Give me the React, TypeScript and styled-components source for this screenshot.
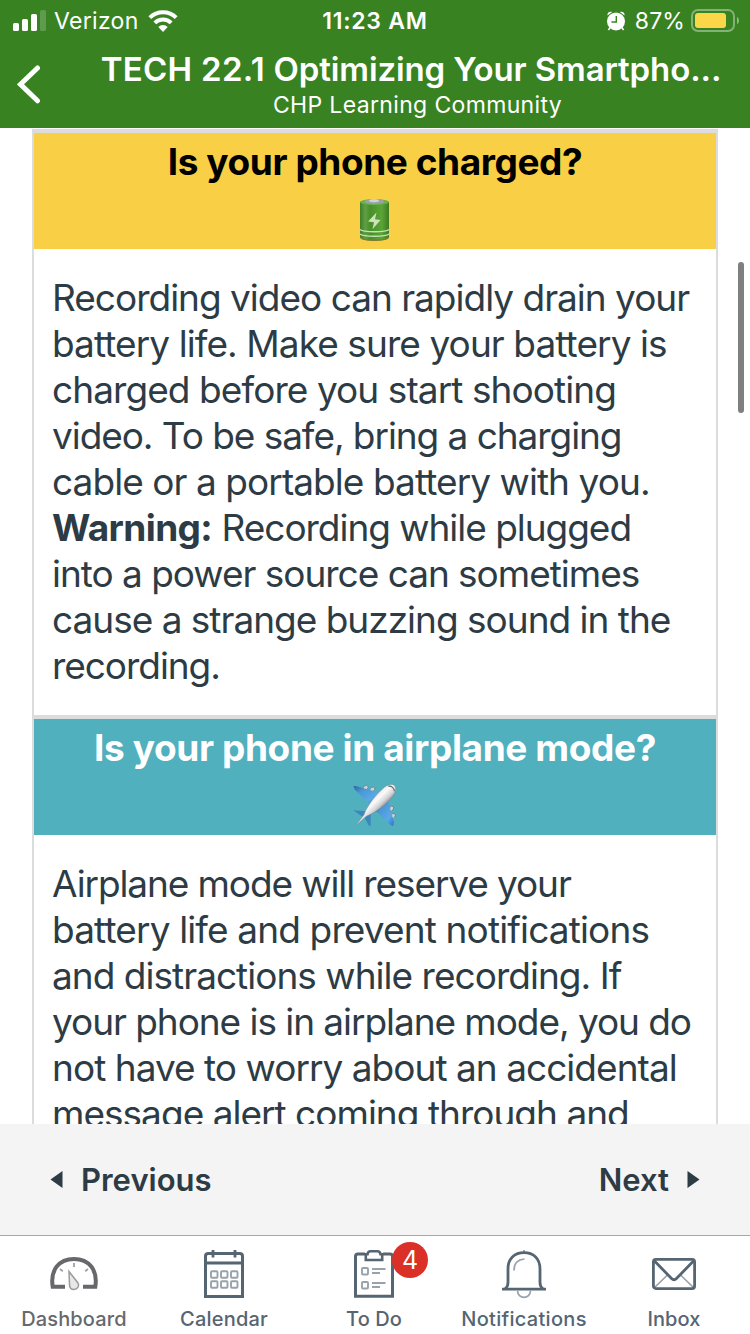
import React from 'react';
import styled, { createGlobalStyle } from 'styled-components';

const GlobalStyle = createGlobalStyle`
  * { box-sizing: border-box; }
  body { margin: 0; background: #fff; font-family: Inter, "Liberation Sans", sans-serif; }
`;

const Screen = styled.div`
  display: flex;
  flex-direction: column;
  width: 750px;
  height: 1334px;
  overflow: hidden;
  background: #fff;
`;

const Header = styled.header`
  height: 128px;
  flex: none;
  background: #388222;
  color: #fff;
`;

const StatusBar = styled.div`
  display: grid;
  grid-template-columns: 1fr auto 1fr;
  align-items: center;
  height: 40px;
  padding: 0 10px 0 13px;
  font-size: 23px;
  line-height: 40px;
`;

const StatusGroup = styled.div<{ $end?: boolean }>`
  display: flex;
  align-items: center;
  justify-content: ${p => (p.$end ? 'flex-end' : 'flex-start')};
`;

const Text = styled.span<{ $ls?: number; $weight?: number }>`
  letter-spacing: ${p => p.$ls ?? 0}px;
  font-weight: ${p => p.$weight ?? 'inherit'};
  white-space: pre;
`;

const Clock = styled(Text)`
  margin-right: 3px;
`;

const Carrier = styled(Text)`
  margin: 0 9px 0 7px;
  padding-top: 1px;
`;

const Percent = styled(Text)`
  margin: 0 6px 0 10px;
  padding-top: 1px;
`;

const NavBar = styled.div`
  display: flex;
  height: 88px;
`;

const BackButton = styled.button`
  display: flex;
  width: 72px;
  padding: 24px 0 0 17px;
  border: 0;
  background: none;
`;

const Titles = styled.div`
  display: flex;
  flex-direction: column;
  align-items: center;
  width: 678px;
`;

const Title = styled.h1`
  margin: 9px 0 0;
  font-size: 33px;
  font-weight: 600;
  line-height: 40px;
  white-space: nowrap;
`;

const Subtitle = styled.div<{ $ls: number }>`
  margin-top: 1px;
  padding-left: 13px;
  font-size: 23px;
  line-height: 30px;
  letter-spacing: ${p => p.$ls}px;
  white-space: nowrap;
`;

const Content = styled.main`
  display: flex;
  height: 996px;
  padding: 1px 6px 0 32px;
  overflow: hidden;
`;

const Card = styled.section`
  width: 686px;
  height: 1200px;
  flex: none;
  border: 2px solid #dcdcdc;
  border-width: 0 2px;
`;

const ScrollThumb = styled.div`
  width: 6px;
  height: 151px;
  margin: 133px 0 0 auto;
  border-radius: 3px;
  background: #7f7f7f;
`;

const Banner = styled.div<{ $bg: string; $color: string }>`
  display: flex;
  flex-direction: column;
  align-items: center;
  height: 120px;
  padding-top: 6px;
  border-top: 4px solid #dcdcdc;
  background: ${p => p.$bg};
  color: ${p => p.$color};
  font-size: 37px;
  font-weight: 700;
  line-height: 46px;
`;

const EmojiSlot = styled.div`
  height: 47px;
  margin-top: 13px;
`;

const Paragraph = styled.div`
  padding: 26px 18px;
  height: 466px;
  color: #2d3b45;
  font-size: 37px;
  line-height: 46px;
`;

const Line = styled.div<{ $ls: number }>`
  white-space: nowrap;
  letter-spacing: ${p => p.$ls}px;
`;

const Pager = styled.nav`
  display: flex;
  align-items: center;
  justify-content: space-between;
  height: 111px;
  flex: none;
  padding: 0 50px 1px 50px;
  background: #f4f4f4;
  color: #2d3b45;
  font-size: 31px;
  font-weight: 600;
`;

const PagerLink = styled.div`
  display: flex;
  align-items: center;
  gap: 18px;
`;

const TabBar = styled.nav`
  display: flex;
  height: 99px;
  flex: none;
  border-top: 1px solid #a6a6a6;
`;

const Tab = styled.div<{ $active?: boolean }>`
  display: flex;
  flex-direction: column;
  align-items: center;
  width: 150px;
  padding: 12px 2px 0 0;
  color: ${p => (p.$active ? '#68686c' : '#556572')};
  font-size: 20px;
  font-weight: 500;
  line-height: 24px;
`;

const TabIcon = styled.div`
  position: relative;
  height: 54px;
  margin-bottom: 5px;
`;

const Badge = styled.span`
  position: absolute;
  left: 38px;
  top: -6px;
  width: 36px;
  height: 36px;
  border-radius: 50%;
  background: #db3027;
  color: #fff;
  font-size: 25px;
  font-weight: 400;
  line-height: 37px;
  text-align: center;
`;

const SignalIcon = () => (
  <svg width="34" height="22" viewBox="0 0 34 22" fill="#fff">
    <rect x="0" y="13" width="6" height="8" rx="1.6" />
    <rect x="9" y="9" width="6" height="12" rx="1.6" />
    <rect x="18" y="4" width="6" height="17" rx="1.6" />
    <rect x="27" y="0" width="6" height="21" rx="1.6" opacity=".2" />
  </svg>
);

const WifiIcon = () => (
  <svg width="30" height="22" viewBox="0 0 30 22">
    <g fill="none" stroke="#fff" strokeWidth="4">
      <path d="M1.8 7.6a19 19 0 0 1 26.4 0" />
      <path d="M6.8 12.9a11.8 11.8 0 0 1 16.4 0" />
    </g>
    <path d="M10.3 16.9a6.8 6.8 0 0 1 9.4 0L15 22z" fill="#fff" />
  </svg>
);

const AlarmIcon = () => (
  <svg width="18" height="20" viewBox="0 0 18 20">
    <circle cx="9" cy="10.4" r="9" fill="#fff" />
    <path d="M.4 4.6C.2 1.8 2.2.2 5.2 1zM17.6 4.6C17.8 1.8 15.8.2 12.8 1z" fill="#fff" />
    <path d="M3.2 16.5 1.4 19M14.8 16.5l1.8 2.5" stroke="#fff" strokeWidth="1.6" />
    <path d="M9.3 5v6H4.5" fill="none" stroke="#388222" strokeWidth="1.4" />
  </svg>
);

const BatteryStatus = () => (
  <svg width="49" height="24" viewBox="0 0 49 24">
    <rect x="1" y="1" width="42" height="21" rx="6" fill="none" stroke="#fff" strokeOpacity=".38" strokeWidth="2" />
    <rect x="4" y="4" width="31" height="15" rx="3" fill="#fad648" />
    <path d="M46 8c2.6 1 2.6 6 0 7z" fill="#fff" fillOpacity=".45" />
  </svg>
);

const BackIcon = () => (
  <svg width="26" height="40" viewBox="0 0 26 40">
    <path d="M20.5 4 3.5 20.3l17 16.5" fill="none" stroke="#fff" strokeWidth="5" strokeLinecap="round" />
  </svg>
);

const BatteryEmoji = () => (
  <svg width="32" height="46" viewBox="0 0 32 46">
    <defs>
      <linearGradient id="cell" x1="0" x2="1">
        <stop offset="0" stopColor="#3f7d27" />
        <stop offset=".18" stopColor="#5fa043" />
        <stop offset=".35" stopColor="#498f2a" />
        <stop offset=".75" stopColor="#5aa535" />
        <stop offset="1" stopColor="#3d7a23" />
      </linearGradient>
    </defs>
    <path d="M1 4v35c0 5 29 5 29 0V4z" fill="url(#cell)" />
    <ellipse cx="15.500" cy="4" rx="14.500" ry="3" fill="#69b04b" />
    <ellipse cx="15.500" cy="3.600" rx="10" ry="2.300" fill="#9aa3a8" />
    <ellipse cx="15" cy="2.600" rx="5" ry="1.600" fill="#cad4e4" />
    <path d="M17.500 14.500 9 23.500l6 .8-1.500 7 8-9.300-5.500-.8z" fill="#cde2bd" />
    <path d="M1 31.500c3 3 26 3 29 0M1 36c3 3 26 3 29 0" fill="none" stroke="#c4e1b3" strokeWidth="1.500" />
    <path d="M2 40c3 3 24 3 27 0" fill="none" stroke="#837b31" strokeWidth="1.300" />
  </svg>
);

const PlaneEmoji = () => (
  <svg width="44" height="46" viewBox="39 42 132 138">
    <defs>
      <linearGradient id="body" gradientUnits="userSpaceOnUse" x1="105" y1="72" x2="138" y2="106">
        <stop offset="0" stopColor="#e9e9ec" />
        <stop offset=".35" stopColor="#fafafa" />
        <stop offset=".7" stopColor="#d3d2d6" />
        <stop offset="1" stopColor="#8b8990" />
      </linearGradient>
      <linearGradient id="wing" x1="0" y1="0" x2="1" y2="1">
        <stop offset="0" stopColor="#2a6499" />
        <stop offset=".3" stopColor="#4a97d6" />
        <stop offset=".7" stopColor="#5aaae6" />
        <stop offset="1" stopColor="#2c6fc4" />
      </linearGradient>
    </defs>
    <g fill="#cfd3d8" stroke="#5f7884" strokeWidth="2">
      <ellipse cx="77" cy="53" rx="8" ry="6" transform="rotate(-30 77 53)" />
      <ellipse cx="97" cy="58" rx="8" ry="6" transform="rotate(-30 97 58)" />
      <ellipse cx="154" cy="116" rx="8" ry="6" transform="rotate(-55 154 116)" />
      <ellipse cx="159" cy="138" rx="8" ry="6" transform="rotate(-55 159 138)" />
    </g>
    <path d="M40 48 50 49 118 68 88 101 45 60z" fill="url(#wing)" />
    <path d="M144 92 162 157 159 168 152 165 108 124z" fill="url(#wing)" />
    <path d="M40 121 78 124 68 140zM74 143 92 126 92 169 86 166z" fill="#3b86bd" />
    <path d="M50 163 72 134C82 106 108 73 134 51c12-9 24-10 30-4 6 7 4 19-5 31-20 26-50 48-80 61L53 162z" fill="url(#body)" stroke="#6f848e" strokeWidth="1.500" />
    <path d="M145 49c10-2 18 5 18 15" fill="none" stroke="#5e6469" strokeWidth="3.500" />
  </svg>
);

const Triangle = ({ flip }: { flip?: boolean }) => (
  <svg width="13" height="17" viewBox="0 0 13 17">
    <path d={flip ? 'M.5 0v17L12.500 8.500z' : 'M12.500 0v17L.5 8.500z'} fill="#2d3b45" />
  </svg>
);

const DashboardIcon = () => (
  <svg width="48" height="54" viewBox="1 0 48 54" fill="none">
    <path d="M16 38.700H3.700C1 22 10 11 25 11s24 11 21.300 27.700H34" stroke="#68686c" strokeWidth="4" />
    <path d="M25 15v4M11 21l2.800 2.300M39 21l-2.800 2.300" stroke="#a0a0a3" strokeWidth="1.800" />
    <path d="M20 23.500 29 35c1.500 3-.5 6.500-4 6.500-3 0-4.500-2-4.500-5z" fill="#e8e8e9" stroke="#9b9b9e" strokeWidth="1.500" />
  </svg>
);

const CalendarIcon = () => (
  <svg width="40" height="54" viewBox="0 0 40 54" fill="none">
    <path d="M1.500 48.500V8Q1.500 5.500 4.500 5.500h31Q38.500 5.500 38.500 8v40.500zM1.500 15h37" stroke="#556572" strokeWidth="3" />
    <path d="M9 2v7.500M31 2v7.500" stroke="#556572" strokeWidth="2.800" />
    {[7, 17, 27].map(x => [23.2, 33.2].map(y => (
      <rect key={`${x}-${y}`} x={x} y={y} width="6.500" height="6.500" rx="1" stroke="#98a2ab" strokeWidth="1.900" />
    )))}
  </svg>
);

const TodoIcon = () => (
  <svg width="40" height="54" viewBox="0 0 40 54" fill="none">
    <path d="M11 6H4Q1.500 6 1.500 8.500v39.800h37V8.500Q38.500 6 36 6h-7" stroke="#556572" strokeWidth="3" />
    <path d="M11.800 12V6.200h1.700q.5-3 3-3h7q2.500 0 3 3h1.700V12z" stroke="#556572" strokeWidth="2.600" />
    <rect x="8" y="20" width="6" height="6.500" rx="1" stroke="#98a2ab" strokeWidth="1.900" />
    <rect x="8" y="34" width="6" height="6.500" rx="1" stroke="#98a2ab" strokeWidth="1.900" />
    <path d="M18 21h13.500M18 25h8M18 35h13.500M18 39h8" stroke="#98a2ab" strokeWidth="1.900" />
  </svg>
);

const BellIcon = () => (
  <svg width="44" height="54" viewBox="0 0 44 54" fill="none">
    <path d="M22 2v4" stroke="#98a2ab" strokeWidth="1.800" />
    <path d="M0 41.200h44" stroke="#556572" strokeWidth="2.800" />
    <path d="M3 40.500q3-1.500 3-6V21C6 10 13 4.700 22 4.700S38 10 38 21v13.500q0 4.500 3 6" stroke="#556572" strokeWidth="2.800" />
    <path d="M12 22.500c0-7 4-11 10.500-11.500M15.500 42.500c0 9.200 13 9.200 13 0" stroke="#98a2ab" strokeWidth="1.700" />
  </svg>
);

const InboxIcon = () => (
  <svg width="44" height="54" viewBox="0 0 44 54" fill="none">
    <path d="M2.500 39.500 15.500 27M41.500 39.500 28.500 27" stroke="#98a2ab" strokeWidth="1.700" />
    <rect x="1.400" y="11.400" width="41.200" height="29.200" rx="2.500" stroke="#556572" strokeWidth="2.800" />
    <path d="M2.500 13 19.500 30.500q2.500 2.500 5 0L41.500 13" stroke="#556572" strokeWidth="2.800" />
  </svg>
);

const tabs = [
  { label: 'Dashboard', icon: <DashboardIcon />, ls: 0.15, active: true },
  { label: 'Calendar', icon: <CalendarIcon />, ls: 0.2 },
  { label: 'To Do', icon: <TodoIcon />, ls: 0.1, badge: 4 },
  { label: 'Notifications', icon: <BellIcon />, ls: 0.3 },
  { label: 'Inbox', icon: <InboxIcon />, ls: 0.1 },
];

export default function App() {
  return (
    <>
      <GlobalStyle />
      <Screen>
        <Header>
          <StatusBar>
            <StatusGroup>
              <SignalIcon />
              <Carrier $ls={0.3}>Verizon</Carrier>
              <WifiIcon />
            </StatusGroup>
            <Clock $weight={600} $ls={0.75}>11:23 AM</Clock>
            <StatusGroup $end>
              <AlarmIcon />
              <Percent $ls={0.1}>87%</Percent>
              <BatteryStatus />
            </StatusGroup>
          </StatusBar>
          <NavBar>
            <BackButton aria-label="Back"><BackIcon /></BackButton>
            <Titles>
              <Title><Text $ls={0.3}>TECH 22.1 </Text><Text $ls={-0.12}>Optimizing Your Smartpho...</Text></Title>
              <Subtitle $ls={0.35}>CHP Learning Community</Subtitle>
            </Titles>
          </NavBar>
        </Header>
        <Content>
          <Card>
            <Banner $bg="#f8cf45" $color="#000">
              <Text $ls={-0.42}>Is your phone charged?</Text>
              <EmojiSlot><BatteryEmoji /></EmojiSlot>
            </Banner>
            <Paragraph>
              <Line $ls={-1}>Recording video can rapidly drain your</Line>
              <Line $ls={-0.92}>battery life. Make sure your battery is</Line>
              <Line $ls={-0.92}>charged before you start shooting</Line>
              <Line $ls={-1.06}>video. To be safe, bring a charging</Line>
              <Line $ls={-0.93}>cable or a portable battery with you.</Line>
              <Line $ls={-1.03}><Text $weight={700} $ls={-0.6}>Warning:</Text> Recording while plugged</Line>
              <Line $ls={-1.02}>into a power source can sometimes</Line>
              <Line $ls={-1}>cause a strange buzzing sound in the</Line>
              <Line $ls={-1.05}>recording.</Line>
            </Paragraph>
            <Banner $bg="#50b0be" $color="#fff">
              <Text $ls={-0.38}>Is your phone in airplane mode?</Text>
              <EmojiSlot><PlaneEmoji /></EmojiSlot>
            </Banner>
            <Paragraph>
              <Line $ls={-1.1}>Airplane mode will reserve your</Line>
              <Line $ls={-0.86}>battery life and prevent notifications</Line>
              <Line $ls={-0.97}>and distractions while recording. If</Line>
              <Line $ls={-1.05}>your phone is in airplane mode, you do</Line>
              <Line $ls={-0.96}>not have to worry about an accidental</Line>
              <Line $ls={-0.98}>message alert coming through and</Line>
            </Paragraph>
          </Card>
          <ScrollThumb />
        </Content>
        <Pager>
          <PagerLink><Triangle /><Text>Previous</Text></PagerLink>
          <PagerLink><Text>Next</Text><Triangle flip /></PagerLink>
        </Pager>
        <TabBar>
          {tabs.map(t => (
            <Tab key={t.label} $active={t.active}>
              <TabIcon>
                {t.icon}
                {t.badge && <Badge>{t.badge}</Badge>}
              </TabIcon>
              <Text $ls={t.ls}>{t.label}</Text>
            </Tab>
          ))}
        </TabBar>
      </Screen>
    </>
  );
}
